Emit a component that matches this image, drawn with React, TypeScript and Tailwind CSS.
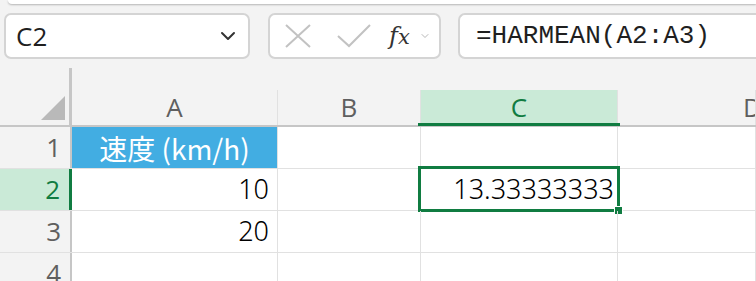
import { ChevronDown } from "lucide-react";

const cols = ["A", "B", "C", "D"];
const colWidths = ["w-[206px]", "w-[143px]", "w-[197px]", "flex-1"];

const cellFont = { fontFamily: '"Noto Sans CJK JP", "Noto Sans", sans-serif' };
const numFont = { fontFamily: '"Noto Sans", "Noto Sans CJK JP", sans-serif' };

function ColumnHeader({ label, index }: { label: string; index: number }) {
  const active = label === "C";
  return (
    <div
      className={`${colWidths[index]} relative flex items-center justify-center border-r border-[#e1e1e1] text-[26px] ${
        active ? "bg-[#caead7] text-[#107c41]" : "text-[#5f5f5f]"
      } ${label === "D" ? "overflow-hidden" : ""}`}
    >
      <span className={label === "D" ? "translate-x-[66px]" : ""}>{label}</span>
      {active && <div className="absolute left-[-3px] right-[-3px] bottom-[-1px] h-[3px] bg-[#107c41]" />}
    </div>
  );
}

function Row({ n, cells }: { n: number; cells: (React.ReactNode | null)[] }) {
  const active = n === 2;
  return (
    <div className="flex h-[42px] border-b border-[#e1e1e1]">
      <div
        className={`w-[72px] shrink-0 flex items-center justify-end pr-[9px] text-[26px] ${
          active
            ? "bg-[#caead7] text-[#107c41] border-r-[3px] border-[#107c41]"
            : "bg-[#f3f3f3] text-[#5f5f5f] border-r-2 border-[#c6c6c6]"
        }`}
      >
        {n}
      </div>
      {cells.map((c, i) => (
        <div key={i} className={`${colWidths[i]} relative border-r border-[#e1e1e1] shrink-0`}>
          {c}
        </div>
      ))}
    </div>
  );
}

export default function App() {
  return (
    <div
      className="w-[756px] h-[281px] overflow-hidden bg-[#f3f3f3]"
      style={{ fontFamily: '"Open Sans", "Noto Sans", sans-serif' }}
    >
      <div className="ml-[8px] h-[4px] bg-white rounded-bl-[10px] shadow-[0_1px_2px_rgba(0,0,0,0.25)]" />

      {/* formula bar */}
      <div className="flex items-center mt-[9px] h-[46px] pl-[4px]">
        <div className="w-[246px] h-full shrink-0 flex items-center justify-between pl-[10px] pr-[8px] bg-white border-2 border-[#d4d4d4] rounded-[7px]">
          <span className="text-[26px] text-[#1f1f1f]">C2</span>
          <ChevronDown className="w-[24px] h-[24px] text-[#333]" strokeWidth={2} />
        </div>
        <div className="ml-[18px] w-[173px] h-full shrink-0 flex items-center pl-[14px] bg-white border-2 border-[#d4d4d4] rounded-[7px]">
          <svg width="28" height="24" viewBox="0 0 28 24" className="text-[#c2c2c2]">
            <path d="M2 1 L26 23 M26 1 L2 23" stroke="currentColor" strokeWidth="2" fill="none" />
          </svg>
          <svg width="34" height="24" viewBox="0 0 34 24" className="ml-[25px] text-[#c2c2c2]">
            <path d="M1 12 L12 22 L33 1" stroke="currentColor" strokeWidth="2" fill="none" />
          </svg>
          <span className="ml-[18px] text-[24px] text-[#333] leading-none" style={{ fontFamily: '"DejaVu Serif", serif' }}>
            <span className="italic">f</span>
            <span className="text-[21px] italic">x</span>
          </span>
          <ChevronDown className="ml-[9px] w-[12px] h-[12px] text-[#b8b8b8]" strokeWidth={2} />
        </div>
        <div className="ml-[17px] flex-1 h-full flex items-center pl-[16px] bg-white border-2 border-[#d4d4d4] rounded-l-[7px] border-r-0">
          <span className="text-[26px] text-[#1f1f1f]" style={{ fontFamily: '"Liberation Mono", monospace' }}>
            =HARMEAN(A2:A3)
          </span>
        </div>
      </div>

      {/* spacer above column headers */}
      <div className="flex h-[31px]">
        <div className="w-[72px] shrink-0 flex justify-end">
          <div className="w-[3px] mt-[9px] bg-[#c6c6c6]" />
        </div>
      </div>

      {/* column headers */}
      <div className="flex h-[37px] border-b-2 border-[#c6c6c6]">
        <div className="w-[72px] shrink-0 relative border-r-[3px] border-[#c6c6c6]">
          <div
            className="absolute left-[41px] top-[6px] w-[24px] h-[24px] bg-[#b9b9b9]"
            style={{ clipPath: "polygon(100% 0, 100% 100%, 0 100%)" }}
          />
        </div>
        {cols.map((c, i) => (
          <ColumnHeader key={c} label={c} index={i} />
        ))}
      </div>

      <div className="bg-white">
        <Row
          n={1}
          cells={[
            <div
              className="h-full bg-[#42ade2] flex items-center justify-center text-white text-[28px]"
              style={cellFont}
            >
              速度 (km/h)
            </div>,
            null,
            null,
            null,
          ]}
        />
        <Row
          n={2}
          cells={[
            <div className="h-full flex items-center justify-end pr-[8px] text-[27px] font-light text-black" style={numFont}>
              10
            </div>,
            null,
            <div className="absolute left-[-3px] right-[-3px] top-[-3px] bottom-[-2px] border-[3px] border-[#107c41] flex items-center justify-end pr-[3px] text-[27px] font-light text-black" style={numFont}>
              13.33333333
              <div className="absolute right-[-6px] bottom-[-6px] w-[9px] h-[9px] bg-[#107c41] border border-white" />
            </div>,
            null,
          ]}
        />
        <Row
          n={3}
          cells={[
            <div className="h-full flex items-center justify-end pr-[8px] text-[27px] font-light text-black" style={numFont}>
              20
            </div>,
            null,
            null,
            null,
          ]}
        />
        <Row n={4} cells={[null, null, null, null]} />
      </div>
    </div>
  );
}
